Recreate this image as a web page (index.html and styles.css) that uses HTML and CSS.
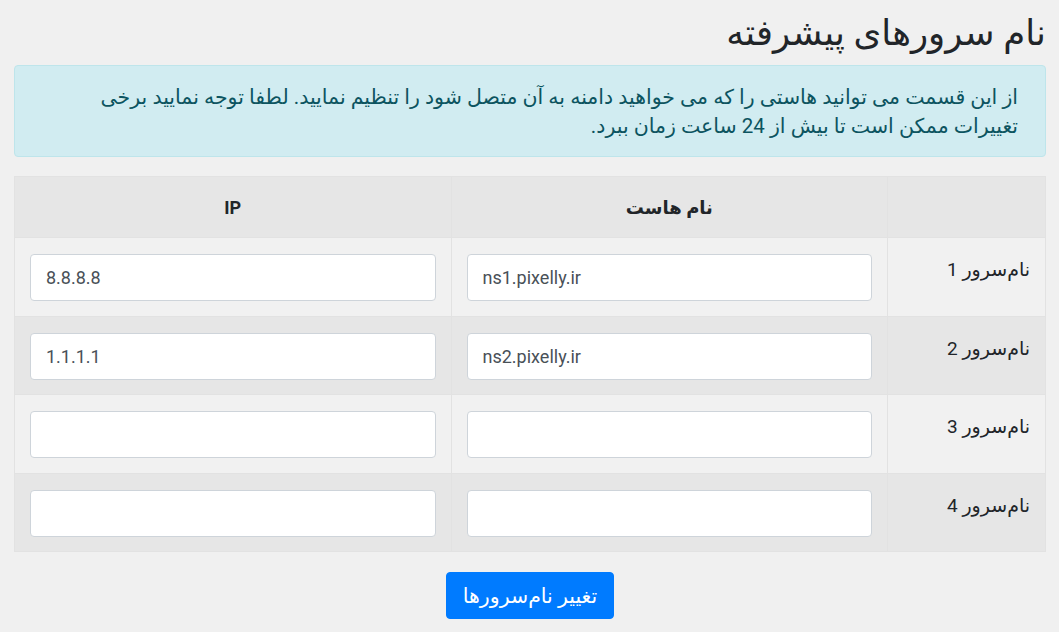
FILE: index.html
```html
<!DOCTYPE html>
<html lang="fa" dir="rtl">
<head>
<meta charset="UTF-8">
<meta name="viewport" content="width=device-width, initial-scale=1.0">
<title>نام سرورهای پیشرفته</title>
<link rel="stylesheet" href="styles.css">
</head>
<body>

<div class="page">
    <h1 class="title">نام سرورهای پیشرفته</h1>

    <div class="alert">
        از این قسمت می توانید هاستی را که می خواهید دامنه به آن متصل شود را تنظیم نمایید. لطفا توجه نمایید برخی<br>
        تغییرات ممکن است تا بیش از 24 ساعت زمان ببرد.
    </div>

    <table class="ns-table">
        <thead>
            <tr>
                <th class="label-col"></th>
                <th>نام هاست</th>
                <th>IP</th>
            </tr>
        </thead>
        <tbody>
            <tr>
                <td class="label-col">نام‌سرور 1</td>
                <td><input type="text" value="ns1.pixelly.ir"></td>
                <td><input type="text" value="8.8.8.8"></td>
            </tr>
            <tr>
                <td class="label-col">نام‌سرور 2</td>
                <td><input type="text" value="ns2.pixelly.ir"></td>
                <td><input type="text" value="1.1.1.1"></td>
            </tr>
            <tr>
                <td class="label-col">نام‌سرور 3</td>
                <td><input type="text" value=""></td>
                <td><input type="text" value=""></td>
            </tr>
            <tr>
                <td class="label-col">نام‌سرور 4</td>
                <td><input type="text" value=""></td>
                <td><input type="text" value=""></td>
            </tr>
        </tbody>
    </table>

    <div class="actions">
        <button type="button" class="btn">تغییر نام‌سرورها</button>
    </div>
</div>

</body>
</html>
```

FILE: styles.css
```css
body {
    font-family: Roboto, "DejaVu Sans", sans-serif;
    background-color: #f0f0f0;
    color: #212529;
    margin: 0;
    padding: 0;
}

.page {
    padding: 0 13px 0 14px;
}

.title {
    font-size: 35.5px;
    font-weight: normal;
    line-height: 1.2;
    margin: 0;
    padding: 12px 0 10px;
    text-align: right;
}

.alert {
    background-color: #d1ecf1;
    border: 1px solid #bee5eb;
    border-radius: 4px;
    color: #0c5460;
    font-size: 20.5px;
    line-height: 29px;
    padding: 17px 27px 15px 20px;
    margin-bottom: 19px;
}

.ns-table {
    width: 100%;
    border-collapse: collapse;
    border: 1px solid #e2e2e2;
}

.ns-table th,
.ns-table td {
    border: 1px solid #e2e2e2;
    padding: 16px 15px 14.5px;
    vertical-align: top;
}

.ns-table th {
    background-color: #e6e6e6;
    font-size: 18px;
    font-weight: bold;
    line-height: 30px;
    text-align: center;
}

.ns-table tbody tr:nth-child(odd) td { background-color: #f1f1f1; }
.ns-table tbody tr:nth-child(even) td { background-color: #e6e6e6; }

.ns-table .label-col {
    width: 127px;
    font-size: 19px;
    line-height: 31px;
    text-align: right;
}

.ns-table input[type="text"] {
    box-sizing: border-box;
    width: 100%;
    height: 47px;
    padding: 6px 15px;
    font-family: Roboto, sans-serif;
    font-size: 18px;
    color: #495057;
    background-color: #fff;
    border: 1px solid #ced4da;
    border-radius: 4px;
    direction: ltr;
    text-align: left;
    display: block;
}

.actions {
    text-align: center;
    padding: 20px 0;
}

.btn {
    font-family: Roboto, "DejaVu Sans", sans-serif;
    font-size: 20.5px;
    color: #fff;
    background-color: #007bff;
    border: 1px solid #007bff;
    border-radius: 4px;
    padding: 0 16px;
    height: 47px;
    cursor: pointer;
}
```
